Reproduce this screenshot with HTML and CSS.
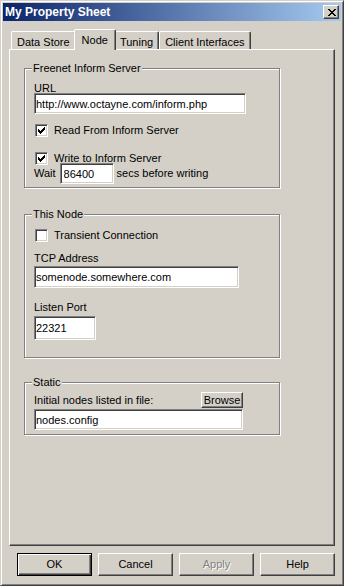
FILE: index.html
```html
<!DOCTYPE html>
<html lang="en">
<head>
    <meta charset="UTF-8">
    <title>My Property Sheet</title>
    <link rel="stylesheet" href="styles.css">
</head>
<body>
    <div class="window">
        <div class="titlebar">
            <span class="title">My Property Sheet</span>
            <button class="close-btn" type="button">
                <svg width="8" height="7" viewBox="0 0 8 7" shape-rendering="crispEdges">
                    <path fill="#000" d="M0 0h2v1h-2zM6 0h2v1h-2zM1 1h2v1h-2zM5 1h2v1h-2zM2 2h4v1h-4zM3 3h2v1h-2zM2 4h4v1h-4zM1 5h2v1h-2zM5 5h2v1h-2zM0 6h2v1h-2zM6 6h2v1h-2z"/>
                </svg>
            </button>
        </div>

        <div class="dialog">
            <div class="tabs">
                <div class="tab">Data Store</div>
                <div class="tab active">Node</div>
                <div class="tab">Tuning</div>
                <div class="tab">Client Interfaces</div>
            </div>

            <div class="panel">
                <fieldset class="group group-inform">
                    <legend>Freenet Inform Server</legend>
                    <label class="field-label" for="url">URL</label>
                    <input class="edit edit-url" type="text" id="url" value="http://www.octayne.com/inform.php">
                    <label class="check check-read">
                        <span class="box"><svg width="7" height="7" viewBox="0 0 7 7" shape-rendering="crispEdges"><path fill="#000" d="M6 0h1v1h-1zM5 1h2v1h-2zM0 2h1v1h-1zM4 2h3v1h-3zM0 3h2v1h-2zM3 3h3v1h-3zM0 4h5v1h-5zM1 5h3v1h-3zM2 6h1v1h-1z"/></svg></span>
                        Read From Inform Server
                    </label>
                    <label class="check check-write">
                        <span class="box"><svg width="7" height="7" viewBox="0 0 7 7" shape-rendering="crispEdges"><path fill="#000" d="M6 0h1v1h-1zM5 1h2v1h-2zM0 2h1v1h-1zM4 2h3v1h-3zM0 3h2v1h-2zM3 3h3v1h-3zM0 4h5v1h-5zM1 5h3v1h-3zM2 6h1v1h-1z"/></svg></span>
                        Write to Inform Server
                    </label>
                    <div class="wait-row">
                        <span class="wait-label">Wait</span>
                        <input class="edit edit-wait" type="text" value="86400">
                        <span class="wait-after">secs before writing</span>
                    </div>
                </fieldset>

                <fieldset class="group group-node">
                    <legend>This Node</legend>
                    <label class="check check-transient">
                        <span class="box"></span>
                        Transient Connection
                    </label>
                    <label class="field-label label-tcp" for="tcp">TCP Address</label>
                    <input class="edit edit-tcp" type="text" id="tcp" value="somenode.somewhere.com">
                    <label class="field-label label-port" for="port">Listen Port</label>
                    <input class="edit edit-port" type="text" id="port" value="22321">
                </fieldset>

                <fieldset class="group group-static">
                    <legend>Static</legend>
                    <div class="file-row">
                        <span>Initial nodes listed in file:</span>
                        <button class="btn btn-browse" type="button">Browse</button>
                    </div>
                    <input class="edit edit-file" type="text" value="nodes.config">
                </fieldset>
            </div>

            <div class="buttons">
                <button class="btn btn-main btn-default" type="button">OK</button>
                <button class="btn btn-main" type="button">Cancel</button>
                <button class="btn btn-main btn-disabled" type="button">Apply</button>
                <button class="btn btn-main" type="button">Help</button>
            </div>
        </div>
    </div>
</body>
</html>
```

FILE: styles.css
```css
* {
    box-sizing: border-box;
}

html, body {
    margin: 0;
}

body {
    background: #d4d0c8;
    font-family: "Liberation Sans", Arial, sans-serif;
    font-size: 11px;
    line-height: 13px;
    color: #000;
}

.window {
    width: 344px;
    height: 586px;
    padding: 2px;
    border: 1px solid;
    border-color: #d4d0c8 #404040 #404040 #d4d0c8;
    box-shadow: inset 1px 1px #fff, inset -1px -1px #808080;
    background: #d4d0c8;
}

/* title bar */
.titlebar {
    height: 18px;
    display: flex;
    align-items: center;
    justify-content: space-between;
    padding: 0 2px;
    background: linear-gradient(to right, #0a246a, #a6caf0);
}

.title {
    color: #fff;
    font-size: 12px;
    font-weight: bold;
}

.close-btn {
    width: 16px;
    height: 14px;
    padding: 0 0 0 1px;
    display: flex;
    align-items: center;
    justify-content: center;
    border: 1px solid;
    border-color: #fff #404040 #404040 #fff;
    box-shadow: inset -1px -1px #808080;
    background: #d4d0c8;
}

/* dialog body */
.dialog {
    padding: 8px 5px 0 6px;
}

.tabs {
    height: 20px;
    display: flex;
    align-items: flex-end;
    padding-left: 2px;
}

.tab {
    height: 18px;
    padding: 4px 5px 0;
    border: 1px solid;
    border-bottom: none;
    border-color: #fff #404040 #fff #fff;
    border-radius: 2px 2px 0 0;
    box-shadow: inset -1px 0 #808080;
    background: #d4d0c8;
    white-space: nowrap;
}

.tab.active {
    position: relative;
    z-index: 1;
    height: 21px;
    margin: 0 -2px -1px;
    padding: 4px 7px 0;
}

.panel {
    width: 326px;
    height: 497px;
    padding: 12px 0 0 14px;
    border: 1px solid;
    border-color: #fff #404040 #404040 #fff;
    box-shadow: inset -1px -1px #808080;
}

/* group boxes */
.group {
    width: 256px;
    margin: 0;
    padding: 0 0 0 9px;
    border: 1px solid #808080;
    box-shadow: inset 1px 1px #fff, 1px 1px #fff;
}

.group legend {
    margin-left: -2px;
    padding: 0 1px;
    background: #d4d0c8;
}

.group-inform {
    padding-bottom: 3px;
}

.group-node {
    margin-top: 20px;
    padding-bottom: 17px;
}

.group-static {
    margin-top: 18px;
    padding-bottom: 4px;
}

.field-label {
    display: block;
    margin: 7px 0 -2px;
}

.label-tcp {
    margin: 10px 0 1px;
}

.label-port {
    margin: 13px 0 2px;
}

.edit {
    display: block;
    height: 21px;
    margin: 0;
    padding: 0 1px;
    border: 1px solid;
    border-color: #808080 #fff #fff #808080;
    box-shadow: inset 1px 1px #404040, inset -1px -1px #d4d0c8;
    background: #fff;
    font: inherit;
    color: #000;
    outline: none;
}

.edit-url {
    width: 212px;
}

.edit-tcp {
    width: 205px;
    height: 22px;
}

.edit-port {
    width: 62px;
    height: 24px;
}

.edit-file {
    width: 209px;
    margin-top: 1px;
}

/* checkboxes */
.check {
    height: 13px;
    display: flex;
    align-items: center;
    margin-left: 1px;
}

.check-read {
    margin-top: 10px;
}

.check-write {
    margin-top: 15px;
}

.check-transient {
    margin-top: 8px;
}

.box {
    width: 13px;
    height: 13px;
    margin-right: 6px;
    display: flex;
    align-items: center;
    justify-content: center;
    border: 1px solid;
    border-color: #808080 #fff #fff #808080;
    box-shadow: inset 1px 1px #404040, inset -1px -1px #d4d0c8;
    background: #fff;
}

.wait-row {
    display: flex;
    align-items: center;
    margin-top: -2px;
}

.wait-label {
    margin-right: 4px;
}

.edit-wait {
    width: 54px;
    padding-left: 3px;
}

.wait-after {
    margin-left: 3px;
}

.file-row {
    width: 209px;
    display: flex;
    align-items: center;
    justify-content: space-between;
    margin-top: 3px;
}

/* push buttons */
.btn {
    margin: 0;
    padding: 0;
    border: 1px solid;
    border-color: #fff #404040 #404040 #fff;
    box-shadow: inset -1px -1px #808080;
    background: #d4d0c8;
    font: inherit;
    color: #000;
}

.btn-browse {
    width: 42px;
    height: 16px;
}

.buttons {
    width: 326px;
    display: flex;
    justify-content: flex-end;
    gap: 6px;
    margin-top: 7px;
}

.btn-main {
    width: 75px;
    height: 23px;
}

.btn-default {
    border-color: #000;
    box-shadow: inset 1px 1px #fff, inset -1px -1px #404040, inset -2px -2px #808080;
}

.btn-disabled {
    color: #808080;
    text-shadow: 1px 1px #fff;
}
```
